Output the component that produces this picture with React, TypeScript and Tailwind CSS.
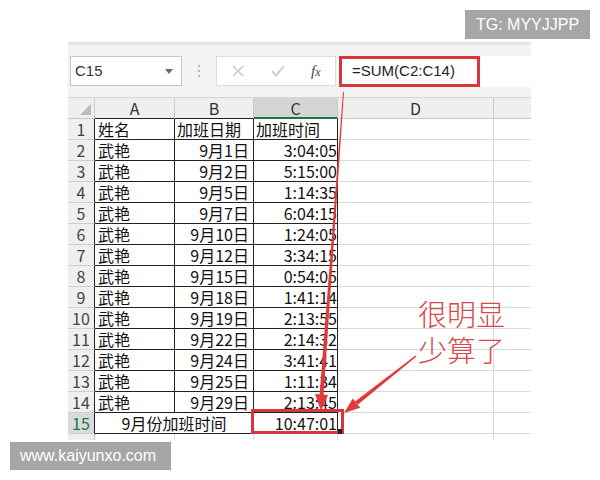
import React from "react";

const rows: [string, string, string][] = [
  ["姓名", "加班日期", "加班时间"],
  ["武艳", "9月1日", "3:04:05"],
  ["武艳", "9月2日", "5:15:00"],
  ["武艳", "9月5日", "1:14:35"],
  ["武艳", "9月7日", "6:04:15"],
  ["武艳", "9月10日", "1:24:05"],
  ["武艳", "9月12日", "3:34:15"],
  ["武艳", "9月15日", "0:54:05"],
  ["武艳", "9月18日", "1:41:14"],
  ["武艳", "9月19日", "2:13:55"],
  ["武艳", "9月22日", "2:14:32"],
  ["武艳", "9月24日", "3:41:41"],
  ["武艳", "9月25日", "1:11:34"],
  ["武艳", "9月29日", "2:13:45"],
];

const cellBase =
  "border-r border-b flex items-center whitespace-nowrap text-[16px] leading-[18px] text-[#111]";

export default function App() {
  return (
    <div
      className="relative w-[600px] h-[480px] bg-white overflow-hidden"
      style={{ fontFamily: '"Noto Sans CJK SC", "Liberation Sans", sans-serif' }}
    >
      <div className="ml-[68px] mt-[42px] w-[463px]">
        {/* top band */}
        <div className="h-[3px] bg-[#e6e6e6]" />
        {/* formula bar */}
        <div className="h-[53px] bg-[#f3f3f3] flex items-center border-b border-[#d6d6d6]">
          <div className="ml-[2px] w-[112px] h-[30px] bg-white border border-[#c6c6c6] flex items-center justify-between pl-[4px] pr-[8px]">
            <span className="text-[15px] leading-[18px] text-[#333]" style={{ fontFamily: '"Liberation Sans", sans-serif' }}>
              C15
            </span>
            <svg width="8" height="5" viewBox="0 0 8 5">
              <path d="M0 0 L8 0 L4 5 Z" fill="#6b6b6b" />
            </svg>
          </div>
          <div className="w-[34px] flex flex-col items-center gap-[3px]">
            <span className="w-[2px] h-[2px] bg-[#b5b5b5]" />
            <span className="w-[2px] h-[2px] bg-[#b5b5b5]" />
            <span className="w-[2px] h-[2px] bg-[#b5b5b5]" />
          </div>
          <div className="w-[120px] h-[30px] bg-white border border-[#dcdcdc] flex items-center">
            <svg className="ml-[15px]" width="12" height="12" viewBox="0 0 12 12">
              <path d="M1 1 L11 11 M11 1 L1 11" stroke="#c4c4c4" strokeWidth="1.4" />
            </svg>
            <svg className="ml-[27px]" width="14" height="12" viewBox="0 0 14 12">
              <path d="M1 6 L5 10.5 L13 1" stroke="#c4c4c4" strokeWidth="1.6" fill="none" />
            </svg>
            <span
              className="ml-[26px] text-[15px] leading-[18px] italic text-[#444]"
              style={{ fontFamily: '"Liberation Serif", serif' }}
            >
              f<span className="text-[12px]">x</span>
            </span>
          </div>
          <div className="ml-[1px] flex-1 h-[31px] bg-white flex items-center">
            <div className="ml-[2px] w-[141px] h-[31px] border-[3px] border-[#d8363e] flex items-center pl-[10px]">
              <span className="text-[15px] leading-[18px] text-[#222]" style={{ fontFamily: '"Liberation Sans", sans-serif' }}>
                =SUM(C2:C14)
              </span>
            </div>
          </div>
        </div>
        {/* grid */}
        <div className="h-[342px] overflow-hidden">
          <div className="grid grid-cols-[27px_80px_79px_84px_156px_37px] auto-rows-[21px]">
            {/* header */}
            <div className="border-r border-b border-[#c9c9c9] bg-[#efefef] relative">
              <svg className="absolute right-[3px] bottom-[3px]" width="11" height="11" viewBox="0 0 11 11">
                <path d="M11 0 L11 11 L0 11 Z" fill="#bcbcbc" />
              </svg>
            </div>
            <div className="border-r border-b border-r-[#c9c9c9] border-b-[#222] bg-[#efefef] flex items-center justify-center text-[16px] leading-[18px] text-[#333]">
              A
            </div>
            <div className="border-r border-b border-r-[#c9c9c9] border-b-[#222] bg-[#efefef] flex items-center justify-center text-[16px] leading-[18px] text-[#333]">
              B
            </div>
            <div className="border-r border-b-2 border-r-[#c9c9c9] border-b-[#217346] bg-[#d4d4d4] flex items-center justify-center text-[16px] leading-[18px] text-[#333]">
              C
            </div>
            <div className="border-r border-b border-[#c9c9c9] bg-[#efefef] flex items-center justify-center text-[16px] leading-[18px] text-[#333]">
              D
            </div>
            <div className="border-b border-[#c9c9c9] bg-[#efefef]" />

            {rows.map((r, i) => (
              <React.Fragment key={i}>
                <div className="border-r border-b border-r-[#222] border-b-[#cfcfcf] bg-[#efefef] flex items-center justify-center text-[16px] leading-[18px] text-[#444]">
                  {i + 1}
                </div>
                <div className={`${cellBase} border-[#222] pl-[3px]`}>{r[0]}</div>
                <div className={`${cellBase} border-[#222] ${i === 0 ? "pl-[2px]" : "justify-end pr-[4px]"}`}>
                  {r[1]}
                </div>
                <div className={`${cellBase} border-[#222] ${i === 0 ? "pl-[2px]" : "justify-end pr-0"}`}>
                  {r[2]}
                </div>
                <div className="border-r border-b border-[#dadada]" />
                <div className="border-b border-[#dadada]" />
              </React.Fragment>
            ))}

            {/* row 15 */}
            <div className="border-r border-b border-r-[#222] border-b-[#cfcfcf] bg-[#dadada] flex items-center justify-center text-[16px] leading-[18px] text-[#217346]">
              15
            </div>
            <div className={`${cellBase} col-span-2 border-[#222] justify-center`}>9月份加班时间</div>
            <div className={`${cellBase} border-[#222] justify-end relative`}>
              10:47:01
              <div className="absolute left-[-3px] top-[-4px] right-[-7px] bottom-[-1px] border-[3px] border-[#d8363e]" />
              <div className="absolute right-[-5px] bottom-[-1px] w-[4px] h-[5px] bg-[#222]" />
            </div>
            <div className="border-r border-b border-[#dadada]" />
            <div className="border-b border-[#dadada]" />

            {/* row 16 */}
            <div className="border-r border-b border-[#cfcfcf] bg-[#efefef] flex items-start justify-center text-[16px] leading-[18px] text-[#444] pt-[2px]">
              16
            </div>
            <div className="border-r border-b border-[#dadada]" />
            <div className="border-r border-b border-[#dadada]" />
            <div className="border-r border-b border-[#dadada]" />
            <div className="border-r border-b border-[#dadada]" />
            <div className="border-b border-[#dadada]" />
          </div>
        </div>
      </div>

      {/* annotation text */}
      <div
        className="absolute left-[418px] top-[295px] text-[29px] leading-[36px] text-[#d9484c] font-light"
        style={{ fontFamily: '"Noto Sans CJK SC", sans-serif' }}
      >
        <div>很明显</div>
        <div>少算了</div>
      </div>

      {/* arrows */}
      <svg className="absolute left-0 top-0 pointer-events-none" width="600" height="480" viewBox="0 0 600 480">
        <polygon points="343,92 344,92 323.5,396 319.5,396" fill="#e03a3a" />
        <polygon points="321,411 315,394 328,395" fill="#e03a3a" />
        <polygon points="415.5,355.5 416.5,356.5 358,404.5 355,401.5" fill="#e03a3a" />
        <polygon points="344,413 352.8,398.4 360.2,407.8" fill="#e03a3a" />
      </svg>

      {/* watermarks */}
      <div
        className="absolute left-[465px] top-[10px] w-[125px] h-[29px] bg-[#a6a6a6] text-white text-[16px] leading-[18px] flex items-center justify-center"
        style={{ fontFamily: '"Liberation Sans", sans-serif' }}
      >
        TG: MYYJJPP
      </div>
      <div
        className="absolute left-[10px] top-[442px] w-[161px] h-[28px] bg-[#a6a6a6] text-white text-[16px] leading-[18px] flex items-center pl-[10px]"
        style={{ fontFamily: '"Liberation Sans", sans-serif' }}
      >
        www.kaiyunxo.com
      </div>
    </div>
  );
}
